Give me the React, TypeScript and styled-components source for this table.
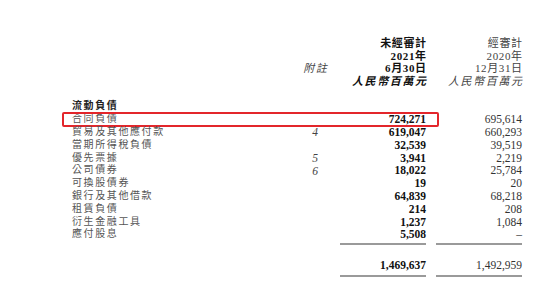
import React from 'react';
import styled, { createGlobalStyle, css } from 'styled-components';

const GlobalStyle = createGlobalStyle`
  html, body {
    margin: 0;
    padding: 0;
    background: #ffffff;
  }
  body {
    font-family: 'Liberation Serif', 'Noto Sans CJK TC', serif;
    color: #222;
  }
`;

const Page = styled.div`
  width: 554px;
  height: 284px;
  box-sizing: border-box;
  padding: 37px 0 0 72px;
  overflow: hidden;
`;

const columns = css`
  display: grid;
  width: 450px;
  grid-template-columns: 228px 30px 96px 96px;
  align-items: center;
`;

const Header = styled.div`
  ${columns};
  grid-auto-rows: 12.6px;
  margin-bottom: 13px;
`;

const HeadCell = styled.div<{ $col: number; $bold?: boolean; $italic?: boolean }>`
  grid-column: ${(p) => p.$col};
  text-align: ${(p) => (p.$col === 2 ? 'center' : 'right')};
  font-size: 11px;
  line-height: 12.6px;
  white-space: nowrap;
  letter-spacing: ${(p) => (p.$italic ? '1.6px' : '0.6px')};
  margin-right: ${(p) => (p.$italic ? '-1.6px' : '-0.6px')};
  font-weight: ${(p) => (p.$bold ? 700 : 400)};
  font-style: ${(p) => (p.$italic ? 'italic' : 'normal')};
  color: ${(p) => (p.$bold ? '#111' : '#444')};
`;

const Row = styled.div<{ $highlight?: boolean; $gap?: number }>`
  ${columns};
  height: 12.8px;
  position: relative;
  margin-top: ${(p) => p.$gap ?? 0}px;

  ${(p) =>
    p.$highlight &&
    css`
      &::after {
        content: '';
        position: absolute;
        left: -10px;
        width: 377px;
        top: -1px;
        height: 15px;
        box-sizing: border-box;
        border: 2px solid #e3262b;
        border-radius: 2px;
      }
    `}
`;

const Label = styled.div<{ $bold?: boolean }>`
  font-size: 10px;
  line-height: 12.8px;
  letter-spacing: 1.6px;
  white-space: nowrap;
  color: ${(p) => (p.$bold ? '#222' : '#555')};
  font-weight: ${(p) => (p.$bold ? 700 : 400)};
`;

const Note = styled.div`
  text-align: center;
  font-size: 11.5px;
  font-style: italic;
  color: #444;
`;

const Amount = styled.div<{ $current?: boolean }>`
  text-align: right;
  font-size: 11.5px;
  line-height: 12.8px;
  font-weight: ${(p) => (p.$current ? 700 : 400)};
  color: ${(p) => (p.$current ? '#111' : '#333')};
`;

const RuleRow = styled.div<{ $gap: number }>`
  ${columns};
  margin-top: ${(p) => p.$gap}px;
`;

const Rule = styled.div<{ $col: number }>`
  grid-column: ${(p) => p.$col};
  margin-left: 10px;
  height: 1.5px;
  background: #9a9a9a;
`;

type Line = {
  label: string;
  note?: string;
  current?: string;
  prior?: string;
  bold?: boolean;
  highlight?: boolean;
};

const lines: Line[] = [
  { label: '流動負債', bold: true },
  { label: '合同負債', current: '724,271', prior: '695,614', highlight: true },
  { label: '貿易及其他應付款', note: '4', current: '619,047', prior: '660,293' },
  { label: '當期所得稅負債', current: '32,539', prior: '39,519' },
  { label: '優先票據', note: '5', current: '3,941', prior: '2,219' },
  { label: '公司債券', note: '6', current: '18,022', prior: '25,784' },
  { label: '可換股債券', current: '19', prior: '20' },
  { label: '銀行及其他借款', current: '64,839', prior: '68,218' },
  { label: '租賃負債', current: '214', prior: '208' },
  { label: '衍生金融工具', current: '1,237', prior: '1,084' },
  { label: '應付股息', current: '5,508', prior: '–' },
];

export default function App() {
  return (
    <>
      <GlobalStyle />
      <Page>
        <Header>
          <HeadCell $col={3} $bold>未經審計</HeadCell>
          <HeadCell $col={4}>經審計</HeadCell>
          <HeadCell $col={3} $bold>2021年</HeadCell>
          <HeadCell $col={4}>2020年</HeadCell>
          <HeadCell $col={2} $italic>附註</HeadCell>
          <HeadCell $col={3} $bold>6月30日</HeadCell>
          <HeadCell $col={4}>12月31日</HeadCell>
          <HeadCell $col={3} $bold $italic>人民幣百萬元</HeadCell>
          <HeadCell $col={4} $italic>人民幣百萬元</HeadCell>
        </Header>

        {lines.map((line) => (
          <Row key={line.label} $highlight={line.highlight}>
            <Label $bold={line.bold}>{line.label}</Label>
            <Note>{line.note}</Note>
            <Amount $current>{line.current}</Amount>
            <Amount>{line.prior}</Amount>
          </Row>
        ))}

        <RuleRow $gap={2}>
          <Rule $col={3} />
          <Rule $col={4} />
        </RuleRow>

        <Row $gap={14}>
          <Label />
          <Note />
          <Amount $current>1,469,637</Amount>
          <Amount>1,492,959</Amount>
        </Row>

        <RuleRow $gap={4}>
          <Rule $col={3} />
          <Rule $col={4} />
        </RuleRow>
      </Page>
    </>
  );
}
